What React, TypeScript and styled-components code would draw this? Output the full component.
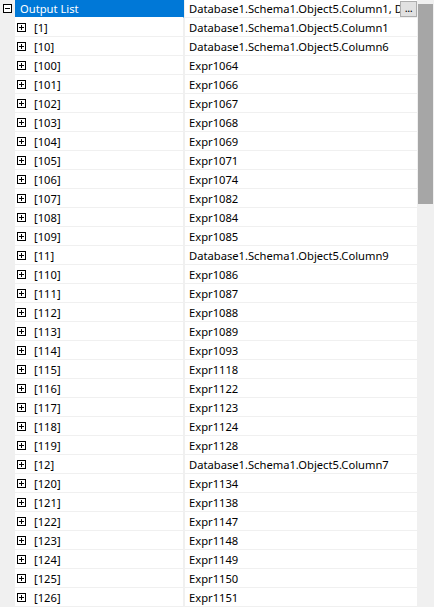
import React from "react";
import styled, { createGlobalStyle } from "styled-components";

const Global = createGlobalStyle`
  html, body { margin: 0; padding: 0; background: #ffffff; }
  body { font-family: "Noto Sans", "Open Sans", sans-serif; font-size: 11.2px; color: #000; }
  * { box-sizing: border-box; }
`;

const Page = styled.div`
  display: flex;
  width: 434px;
  height: 607px;
  overflow: hidden;
  background: #f0f0f0;
`;

const Grid = styled.div`
  flex: 1;
  display: flex;
  flex-direction: column;
  min-width: 0;
`;

const Row = styled.div<{ $header?: boolean }>`
  display: flex;
  height: ${(p) => (p.$header ? 18 : 19)}px;
  flex: 0 0 auto;
`;

const Gutter = styled.div`
  width: 15px;
  flex: 0 0 15px;
  background: #f0f0f0;
  display: flex;
  align-items: flex-start;
  padding-top: 4px;
  padding-left: 3px;
`;

const NameCell = styled.div<{ $selected?: boolean }>`
  width: 169px;
  flex: 0 0 169px;
  display: flex;
  align-items: center;
  background: ${(p) => (p.$selected ? "#0078d7" : "#ffffff")};
  color: ${(p) => (p.$selected ? "#ffffff" : "#000000")};
  border-right: 1px solid ${(p) => (p.$selected ? "#0078d7" : "#f0f0f0")};
  border-bottom: 1px solid ${(p) => (p.$selected ? "#ffffff" : "#f0f0f0")};
  padding-left: ${(p) => (p.$selected ? 5 : 2)}px;
  white-space: nowrap;
`;

const ValueCell = styled.div`
  flex: 1;
  min-width: 0;
  display: flex;
  align-items: center;
  background: #ffffff;
  border-bottom: 1px solid #f0f0f0;
  border-left: 1px solid #f0f0f0;
  padding-left: 4px;
  white-space: nowrap;
  overflow: hidden;
`;

const Clip = styled.div`
  flex: 1;
  min-width: 0;
  overflow: hidden;
  white-space: nowrap;
`;

const EllipsisButton = styled.div`
  flex: 0 0 17px;
  width: 17px;
  height: 16px;
  background: #e1e1e1;
  border: 1px solid #adadad;
  display: flex;
  align-items: center;
  justify-content: center;
  font-size: 11px;
  line-height: 1;
  padding-bottom: 3px;
  letter-spacing: -0.5px;
`;

const Label = styled.span`
  margin-left: 8px;
`;

const Scrollbar = styled.div`
  width: 17px;
  flex: 0 0 17px;
  background: #f0f0f0;
  display: flex;
  flex-direction: column;
  padding-top: 4px;
  padding-left: 1px;
`;

const Thumb = styled.div`
  width: 15px;
  height: 200px;
  background: #a6a6a6;
`;

const BoxIcon = ({ plus }: { plus?: boolean }) => (
  <svg width="9" height="9" viewBox="0 0 9 9" style={{ display: "block", flex: "0 0 9px" }}>
    <rect x="0.5" y="0.5" width="8" height="8" fill="#ffffff" stroke="#000000" />
    <line x1="2" y1="4.5" x2="7" y2="4.5" stroke="#000000" />
    {plus && <line x1="4.5" y1="2" x2="4.5" y2="7" stroke="#000000" />}
  </svg>
);

type Item = { key: string; value: string };

const items: Item[] = [
  { key: "[1]", value: "Database1.Schema1.Object5.Column1" },
  { key: "[10]", value: "Database1.Schema1.Object5.Column6" },
  { key: "[100]", value: "Expr1064" },
  { key: "[101]", value: "Expr1066" },
  { key: "[102]", value: "Expr1067" },
  { key: "[103]", value: "Expr1068" },
  { key: "[104]", value: "Expr1069" },
  { key: "[105]", value: "Expr1071" },
  { key: "[106]", value: "Expr1074" },
  { key: "[107]", value: "Expr1082" },
  { key: "[108]", value: "Expr1084" },
  { key: "[109]", value: "Expr1085" },
  { key: "[11]", value: "Database1.Schema1.Object5.Column9" },
  { key: "[110]", value: "Expr1086" },
  { key: "[111]", value: "Expr1087" },
  { key: "[112]", value: "Expr1088" },
  { key: "[113]", value: "Expr1089" },
  { key: "[114]", value: "Expr1093" },
  { key: "[115]", value: "Expr1118" },
  { key: "[116]", value: "Expr1122" },
  { key: "[117]", value: "Expr1123" },
  { key: "[118]", value: "Expr1124" },
  { key: "[119]", value: "Expr1128" },
  { key: "[12]", value: "Database1.Schema1.Object5.Column7" },
  { key: "[120]", value: "Expr1134" },
  { key: "[121]", value: "Expr1138" },
  { key: "[122]", value: "Expr1147" },
  { key: "[123]", value: "Expr1148" },
  { key: "[124]", value: "Expr1149" },
  { key: "[125]", value: "Expr1150" },
  { key: "[126]", value: "Expr1151" },
];

export default function App() {
  return (
    <>
      <Global />
      <Page>
        <Grid>
          <Row $header>
            <Gutter>
              <BoxIcon />
            </Gutter>
            <NameCell $selected>Output List</NameCell>
            <ValueCell>
              <Clip>Database1.Schema1.Object5.Column1, Database1.Schema1.Object5.Column6</Clip>
              <EllipsisButton>...</EllipsisButton>
            </ValueCell>
          </Row>
          {items.map((it) => (
            <Row key={it.key}>
              <Gutter />
              <NameCell>
                <BoxIcon plus />
                <Label>{it.key}</Label>
              </NameCell>
              <ValueCell>
                <Clip>{it.value}</Clip>
              </ValueCell>
            </Row>
          ))}
        </Grid>
        <Scrollbar>
          <Thumb />
        </Scrollbar>
      </Page>
    </>
  );
}
